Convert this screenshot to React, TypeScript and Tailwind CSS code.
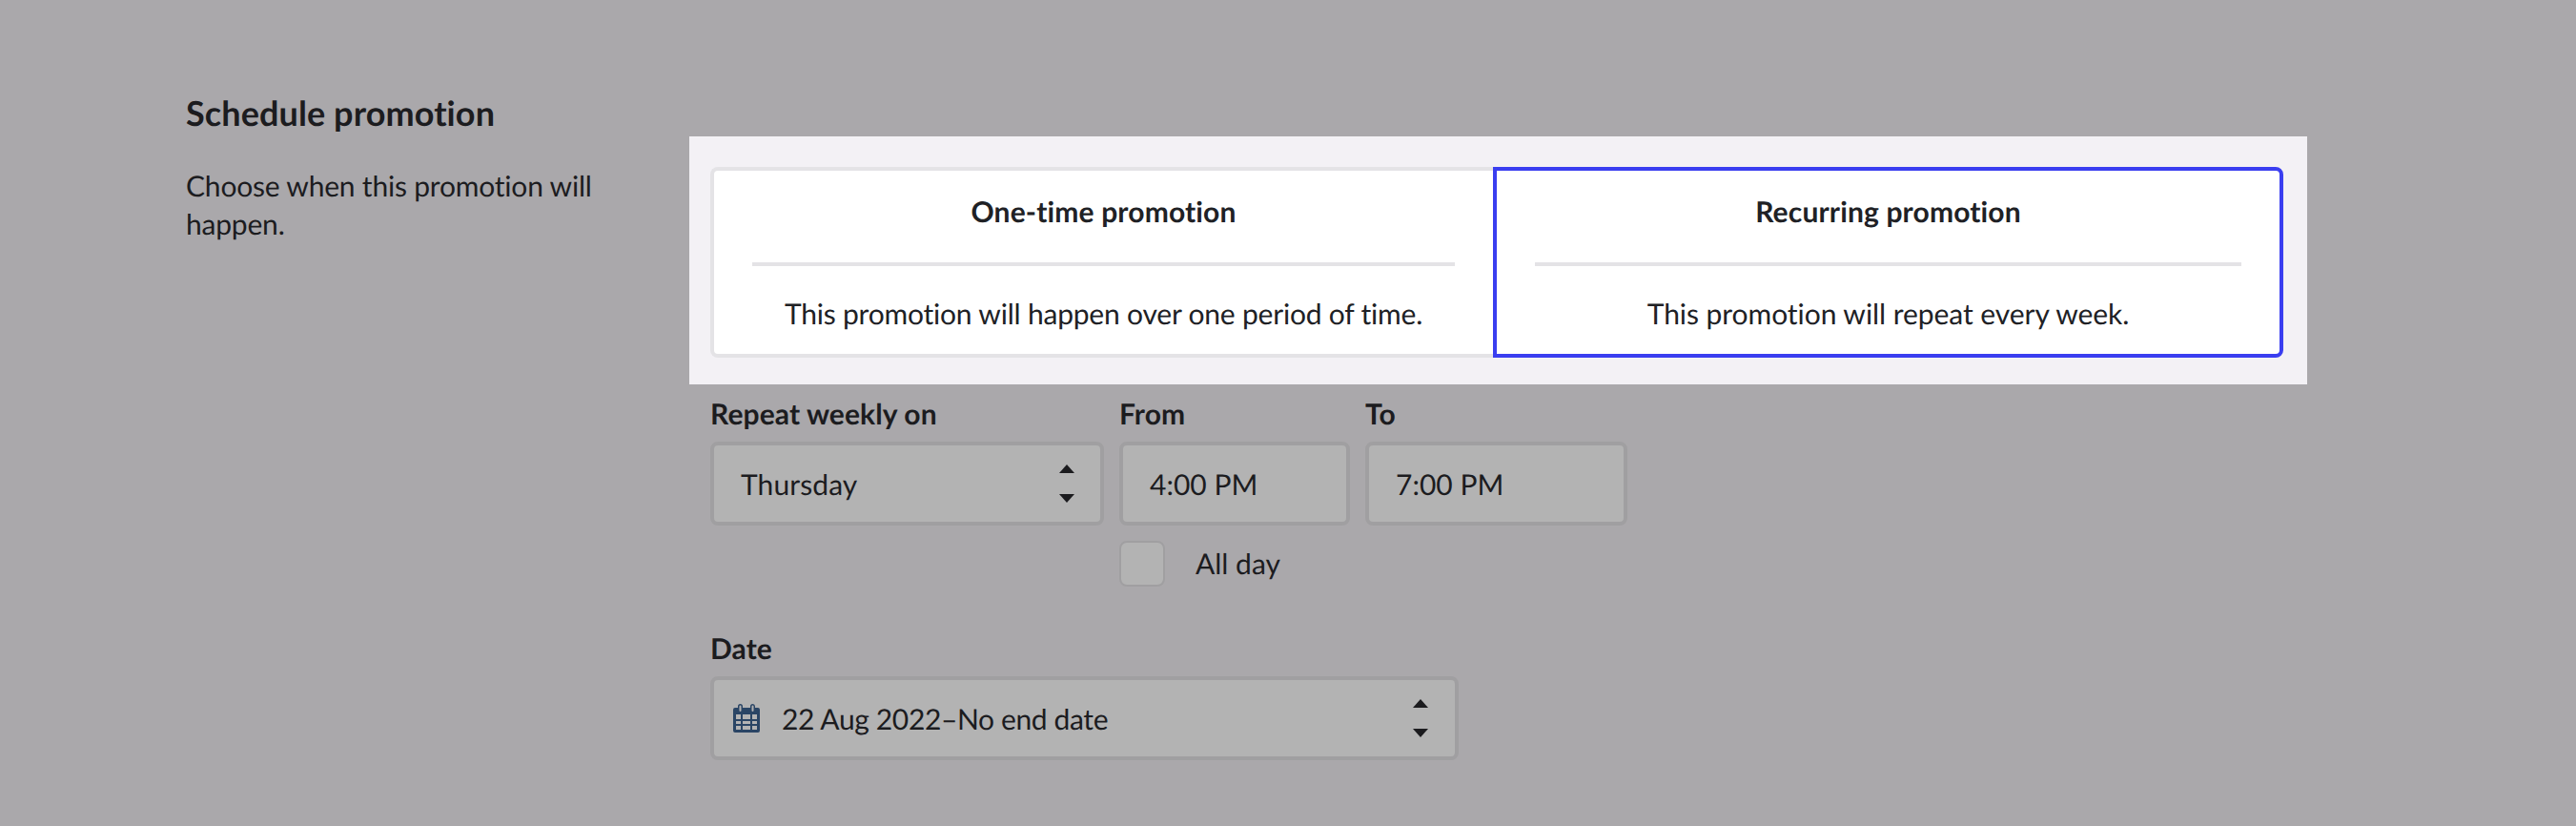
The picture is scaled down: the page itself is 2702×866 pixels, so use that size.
function Arrows() {
  return (
    <svg width="16" height="40" viewBox="0 0 16 40" className="shrink-0 text-[#1b1b1e]">
      <path d="M8 0L16 9H0Z" fill="currentColor" />
      <path d="M0 31H16L8 40Z" fill="currentColor" />
    </svg>
  );
}

function CalendarIcon() {
  return (
    <svg width="28" height="30" viewBox="0 0 28 30" className="shrink-0">
      <path
        fill="#2a4565"
        fillRule="evenodd"
        d="M2 4H5V2.5a2.5 2.5 0 0 1 5 0V4H18V2.5a2.5 2.5 0 0 1 5 0V4H26a2 2 0 0 1 2 2V28a2 2 0 0 1-2 2H2a2 2 0 0 1-2-2V6a2 2 0 0 1 2-2ZM3 11V16H8V11ZM10 11V16H18V11ZM20 11V16H25V11ZM3 18V21H8V18ZM10 18V21H18V18ZM20 18V21H25V18ZM3 23V27H8V23ZM10 23V27H18V23ZM20 23V27H25V23Z"
      />
      <path fill="#b3b3b3" d="M6.5 2.5a1 1 0 0 1 2 0V7a1 1 0 0 1-2 0ZM19.5 2.5a1 1 0 0 1 2 0V7a1 1 0 0 1-2 0Z" />
    </svg>
  );
}

const fieldClass = 'flex h-[88px] items-center rounded-lg border-4 border-[#a09fa1] bg-[#b3b3b3] text-[30px] text-[#1c1c1f]';

function Label({ children }: { children: string }) {
  return <div className="mb-[9px] h-[40px] text-[30px] font-bold leading-[40px] tracking-[0.1px] text-[#1c1c1f]">{children}</div>;
}

export default function App() {
  return (
    <div className="flex h-[866px] w-full bg-[#aaa8ab] pl-[195px] font-['Lato','Noto_Sans',sans-serif] [text-rendering:geometricPrecision]">
      {/* Left column */}
      <div className="w-[528px] shrink-0 pt-[95px]">
        <h2 className="text-[36px] font-bold leading-[46px] tracking-[0.1px] text-[#1c1c1f]">Schedule promotion</h2>
        <p className="mt-[34px] w-[460px] text-[30px] leading-[40px] tracking-[-0.2px] text-[#1c1c1f]">
          Choose when this promotion will happen.
        </p>
      </div>

      {/* Right column */}
      <div className="w-[1697px] shrink-0 pt-[143px]">
        <div className="flex h-[260px] bg-[#f3f1f5] pl-[22px] pt-8">
          <div className="flex h-[200px] w-[1650px]">
            <div className="flex w-[821px] flex-col rounded-l-lg border-y-4 border-l-4 border-[#e4e3e6] bg-white pl-10 pr-10">
              <div className="flex h-[96px] items-center justify-center pb-[10px] text-[30px] font-bold tracking-[0.15px] text-[#202125]">One-time promotion</div>
              <div className="h-1 bg-[#e4e3e6]" />
              <div className="flex flex-1 items-center justify-center pt-[8px] text-[30px] tracking-[-0.2px] text-[#202125]">
                This promotion will happen over one period of time.
              </div>
            </div>
            <div className="flex w-[829px] flex-col rounded-r-lg border-4 border-[#3a3ef0] bg-white px-10">
              <div className="flex h-[96px] items-center justify-center pb-[10px] text-[30px] font-bold tracking-[0.15px] text-[#202125]">Recurring promotion</div>
              <div className="h-1 bg-[#e4e3e6]" />
              <div className="flex flex-1 items-center justify-center pt-[8px] text-[30px] tracking-[-0.05px] text-[#202125]">
                This promotion will repeat every week.
              </div>
            </div>
          </div>
        </div>

        <div className="pl-[22px] pt-[11px]">
          <div className="flex">
            <div className="w-[413px]">
              <Label>Repeat weekly on</Label>
              <div className={`${fieldClass} justify-between pl-7 pr-[27px]`}>
                <span className="pt-[2px] tracking-[0.1px]">Thursday</span>
                <Arrows />
              </div>
            </div>
            <div className="ml-4 w-[242px]">
              <Label>From</Label>
              <div className={`${fieldClass} pl-7`}>
                <span className="pt-[2px]">4:00 PM</span>
              </div>
              <div className="mt-4 flex items-center">
                <div className="h-12 w-12 rounded-lg border-2 border-[#a09fa1] bg-[#b3b3b3]" />
                <span className="ml-8 text-[30px] text-[#1c1c1f]">All day</span>
              </div>
            </div>
            <div className="ml-4 w-[275px]">
              <Label>To</Label>
              <div className={`${fieldClass} pl-7`}>
                <span className="pt-[2px]">7:00 PM</span>
              </div>
            </div>
          </div>

          <div className="mt-[45px] w-[785px]">
            <Label>Date</Label>
            <div className={`${fieldClass} justify-between pl-5 pr-[28px]`}>
              <div className="flex items-center gap-[23px]">
                <CalendarIcon />
                <span className="pt-[2px] tracking-[-0.37px]">22 Aug 2022–No end date</span>
              </div>
              <Arrows />
            </div>
          </div>
        </div>
      </div>
    </div>
  );
}
